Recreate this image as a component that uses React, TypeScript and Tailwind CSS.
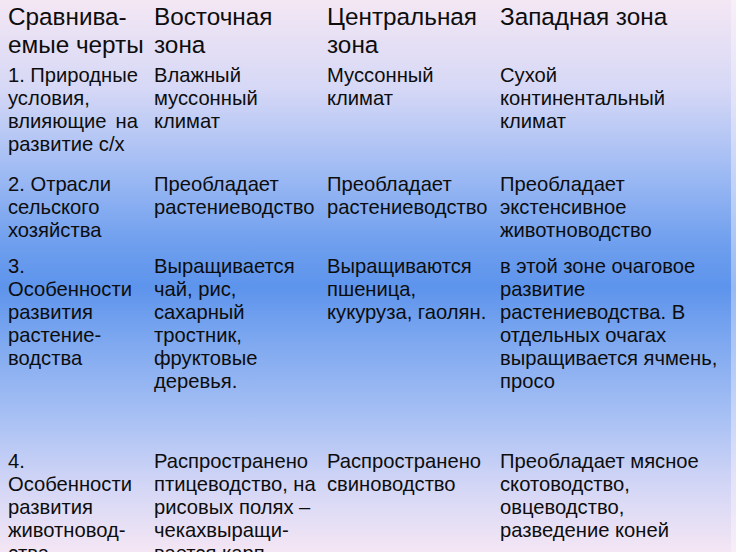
const head: string[][] = [
  ['Сравнива-', 'емые черты'],
  ['Восточная', 'зона'],
  ['Центральная', 'зона'],
  ['Западная зона'],
];

// lines broken as on the slide
const rows: string[][][] = [
  [
    ['1. Природные', 'условия,', 'влияющие на', 'развитие с/х'],
    ['Влажный', 'муссонный', 'климат'],
    ['Муссонный', 'климат'],
    ['Сухой', 'континентальный', 'климат'],
  ],
  [
    ['2. Отрасли', 'сельского', 'хозяйства'],
    ['Преобладает', 'растениеводство'],
    ['Преобладает', 'растениеводство'],
    ['Преобладает', 'экстенсивное', 'животноводство'],
  ],
  [
    ['3.', 'Особенности', 'развития', 'растение-', 'водства'],
    ['Выращивается', 'чай, рис,', 'сахарный', 'тростник,', 'фруктовые', 'деревья.'],
    ['Выращиваются', 'пшеница,', 'кукуруза, гаолян.'],
    ['в этой зоне очаговое', 'развитие', 'растениеводства. В', 'отдельных очагах', 'выращивается ячмень,', 'просо'],
  ],
  [
    ['4.', 'Особенности', 'развития', 'животновод-', 'ства'],
    ['Распространено', 'птицеводство, на', 'рисовых полях –', 'чекахвыращи-', 'вается карп'],
    ['Распространено', 'свиноводство'],
    ['Преобладает мясное', 'скотоводство,', 'овцеводство,', 'разведение коней'],
  ],
];

// padding-top per row, so first lines land where the slide has them
const rowPad = ['pt-[4px]', 'pt-[5px]', 'pt-[4px]', 'pt-[4px]'];

export default function App() {
  return (
    <div className="flex h-[552px] w-[736px] overflow-hidden font-['Liberation_Sans',Arial,sans-serif] text-[#0d0d0d]">
      <div className="grid h-full w-[731px] grid-cols-[146px_173px_173px_239px] grid-rows-[60px_108px_83px_195px_106px] bg-[linear-gradient(to_bottom,#f4e7f4_0%,#d6d8f6_16%,#a3bdf4_30%,#6f9fee_44%,#5d94ec_52%,#7ea8f0_62%,#a9c1f4_76%,#d3d6f6_88%,#f4e6f4_100%)]">
        {head.map((lines, j) => (
          <div key={j} className="pl-2 pt-[3px] text-[24.3px] leading-[27.5px]">
            {lines.map((l) => (
              <div key={l} className="whitespace-nowrap">{l}</div>
            ))}
          </div>
        ))}
        {rows.map((row, i) =>
          row.map((lines, j) => {
            const justify = i === 0 && j === 0;
            return (
              <div
                key={i + '-' + j}
                className={'overflow-hidden pl-2 text-[20.2px] leading-[23px] ' + rowPad[i] + (justify ? ' pr-2' : '')}
              >
                {lines.map((l, k) =>
                  justify && k < lines.length - 1 && l.includes(' ') ? (
                    <div key={k} className="flex justify-between whitespace-nowrap">
                      {l.split(' ').map((w) => (
                        <span key={w}>{w}</span>
                      ))}
                    </div>
                  ) : (
                    <div key={k} className="whitespace-nowrap">{l}</div>
                  )
                )}
              </div>
            );
          })
        )}
      </div>
      <div className="flex-1 bg-[linear-gradient(to_bottom,#f8eff8_0%,#e2e3f8_18%,#bcd0f7_36%,#97b9f3_52%,#bcd0f7_70%,#e2e2f8_86%,#f8eef8_100%)]" />
    </div>
  );
}
